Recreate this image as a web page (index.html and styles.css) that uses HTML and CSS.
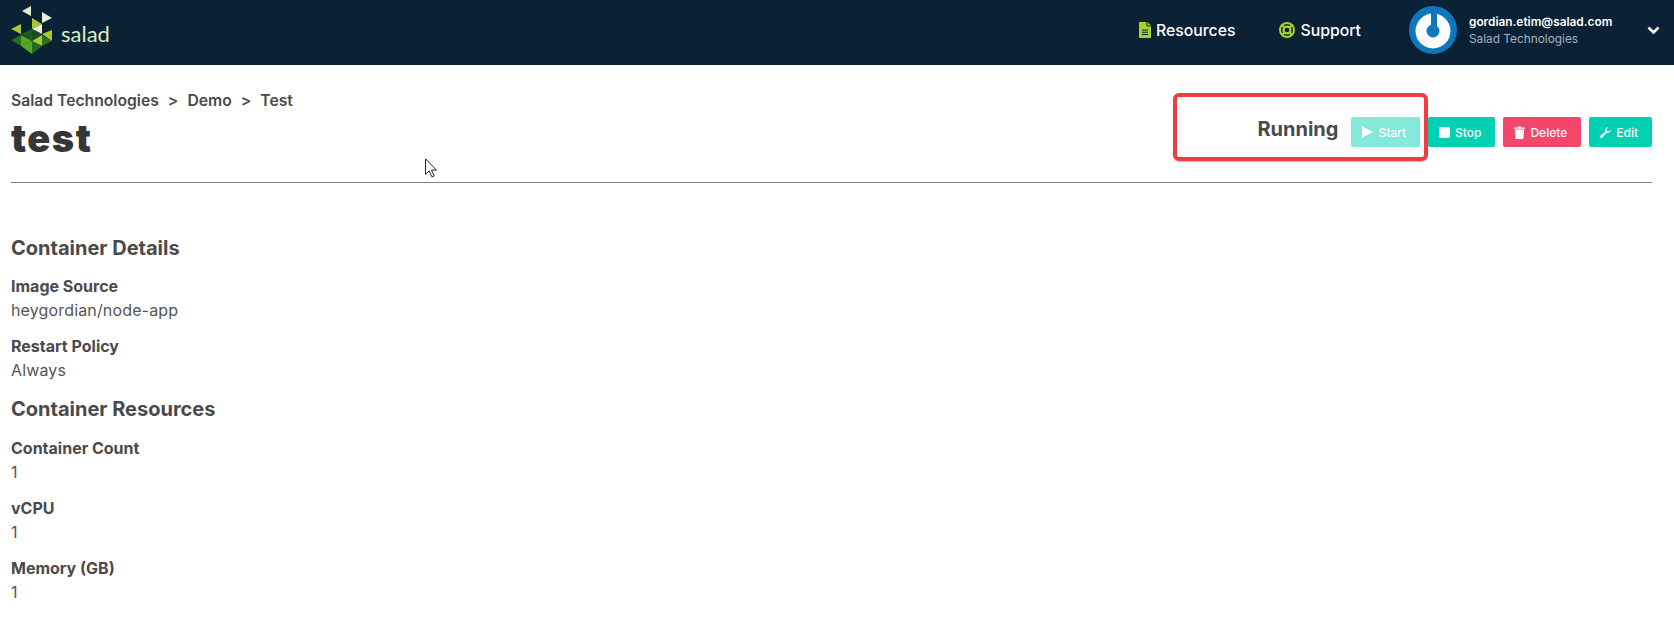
FILE: index.html
```html
<!DOCTYPE html>
<html lang="en">
<head>
<meta charset="utf-8">
<title>test</title>
<link rel="stylesheet" href="styles.css">
</head>
<body>
<header class="topbar">
  <a class="logo">
    <svg class="logo-mark" viewBox="11 5 41 48" width="41" height="48" aria-hidden="true">
      <polygon points="22,10 31,5 31,15" fill="#dcedc8"/>
      <polygon points="42,11 52,17 42,22" fill="#e4f2d2"/>
      <polygon points="32,17 42,23 32,28" fill="#a6c832"/>
      <polygon points="32,28 42,23 42,33" fill="#e4f2d2"/>
      <polygon points="11,28 21,23 21,33" fill="#a6c832"/>
      <polygon points="21,33 32,28 32,40" fill="#1f5a22"/>
      <polygon points="32,28 42,33 32,40" fill="#1c4f20"/>
      <polygon points="42,33 52,29 52,40" fill="#a6c832"/>
      <polygon points="11,39 21,34 21,45" fill="#2c6a22"/>
      <polygon points="21,34 32,40 21,45" fill="#5aa526"/>
      <polygon points="32,40 42,34 42,45" fill="#a6c832"/>
      <polygon points="42,34 52,40 42,45" fill="#2f7023"/>
      <polygon points="21,45 32,40 32,53" fill="#5aa526"/>
      <polygon points="32,40 42,45 32,53" fill="#2c6a22"/>
    </svg>
    <span class="logo-word">salad</span>
  </a>
  <nav class="nav">
    <a class="nav-link">
      <svg class="nav-icon" viewBox="0 0 12 16" width="12" height="16" aria-hidden="true"><path fill="#a6d32b" fill-rule="evenodd" d="M0 1C0 .4.4 0 1 0h6.500v4.500H12V15c0 .6-.4 1-1 1H1c-.6 0-1-.4-1-1zM8.500 0L12 3.500H8.500zM3 7.500v1h6v-1zm0 2.200v1h6v-1zm0 2.200v1h6v-1z"/></svg>
      Resources
    </a>
    <a class="nav-link">
      <svg class="nav-icon" viewBox="0 0 16 16" width="16" height="16" aria-hidden="true"><circle cx="8" cy="8" r="8" fill="#a6d32b"/><circle cx="8" cy="8" r="5.300" fill="none" stroke="#0a2136" stroke-width="1.400"/><path d="M3.500 3.500l9 9M12.500 3.500l-9 9" stroke="#a6d32b" stroke-width="2.200"/><circle cx="8" cy="8" r="2.300" fill="#0a2136"/></svg>
      Support
    </a>
  </nav>
  <div class="account">
    <svg class="avatar" viewBox="0 0 48 48" width="48" height="48" aria-hidden="true">
      <circle cx="24" cy="24" r="24" fill="#0f78bd"/>
      <circle cx="24" cy="25" r="12" fill="none" stroke="#fbfbfb" stroke-width="11"/>
      <path d="M25 7v17" stroke="#0f78bd" stroke-width="6" stroke-linecap="round"/>
    </svg>
    <div class="account-text">
      <div class="account-email">gordian.etim@salad.com</div>
      <div class="account-org">Salad Technologies</div>
    </div>
    <svg class="chevron" viewBox="0 0 13 9" width="13" height="9" aria-hidden="true"><path d="M1.500 1.500l5 5 5-5" fill="none" stroke="#fff" stroke-width="2.600"/></svg>
  </div>
</header>

<main class="page">
  <section class="title-row">
    <div class="title-block">
      <div class="crumbs"><span>Salad Technologies</span><span>&gt;</span><span>Demo</span><span>&gt;</span><span>Test</span></div>
      <h1 class="title">test</h1>
    </div>
    <div class="actions">
      <div class="status-group">
        <span class="status">Running</span>
        <button class="btn btn-disabled"><svg viewBox="0 0 12 12" width="11" height="12" aria-hidden="true"><path d="M0 0l12 6-12 6z" fill="#fff"/></svg>Start</button>
        <span class="highlight"></span>
      </div>
      <button class="btn btn-teal"><svg viewBox="0 0 10 10" width="11" height="11" aria-hidden="true"><rect width="10" height="10" rx="1.500" fill="#fff"/></svg>Stop</button>
      <button class="btn btn-red"><svg viewBox="0 0 11 13" width="11" height="13" aria-hidden="true"><path d="M0 1.500h3.500L4 .5h3l.5 1H11v1.300H0zM1 3.500h9l-.6 8.500c0 .6-.5 1-1 1H2.600c-.5 0-1-.4-1-1z" fill="#fff"/></svg>Delete</button>
      <button class="btn btn-teal"><svg viewBox="0 0 12 12" width="11" height="11" aria-hidden="true"><path d="M11.800 3a3.500 3.500 0 0 1-4.800 3.200L2.800 11.500c-.6.700-1.600.7-2.200.1s-.6-1.600.1-2.200L6 5.200A3.500 3.500 0 0 1 9.200.3L7.200 2.400l.5 2 2 .5 2-2z" fill="#fff"/></svg>Edit</button>
    </div>
  </section>
  <hr class="rule">

  <h2 class="section-title first">Container Details</h2>
  <div class="field"><div class="field-label">Image Source</div><div class="field-value">heygordian/node-app</div></div>
  <div class="field"><div class="field-label">Restart Policy</div><div class="field-value">Always</div></div>

  <h2 class="section-title">Container Resources</h2>
  <div class="field"><div class="field-label">Container Count</div><div class="field-value">1</div></div>
  <div class="field"><div class="field-label">vCPU</div><div class="field-value">1</div></div>
  <div class="field"><div class="field-label">Memory (GB)</div><div class="field-value">1</div></div>
</main>

<svg class="cursor" viewBox="0 0 13 20" width="13" height="20" aria-hidden="true"><path d="M.5.8v15.500l3.700-3.400 2.700 6 2.300-1-2.700-5.800h5z" fill="#fff" stroke="#222" stroke-width="1"/></svg>
</body>
</html>
```
FILE: styles.css
```css
* { box-sizing: border-box; }
html, body { margin: 0; padding: 0; }
body {
  position: relative;
  height: 643px;
  overflow: hidden;
  background: #fff;
  color: #4a4a4a;
  font-family: "Inter", "Open Sans", sans-serif;
}
.topbar {
  display: flex;
  align-items: center;
  height: 65px;
  background: #0a2136;
  color: #fff;
  padding: 0 14px 5px 11px;
}
.logo { display: flex; align-items: center; }
.logo-mark { display: block; }
.logo-word {
  margin-left: 9px;
  margin-top: 6px;
  font-family: "Lato", sans-serif;
  font-size: 22px;
  color: #d8ecc0;
}
.nav { display: flex; align-items: center; gap: 44px; margin-left: auto; }
.nav-link {
  display: flex;
  align-items: center;
  gap: 5px;
  font-size: 15.800px;
  font-weight: 500;
}
.nav-icon { display: block; }
.account { display: flex; align-items: center; margin-left: 48px; }
.avatar { display: block; }
.account-text { margin-left: 12px; width: 178px; margin-top: 1px; }
.account-email { font-size: 11.850px; line-height: 17px; font-weight: 600; }
.account-org { font-size: 11.850px; line-height: 17px; color: #a9b1b8; }
.chevron { display: block; margin-top: 1px; }

.page { padding: 0 22px 0 11px; }
.title-row {
  display: flex;
  justify-content: space-between;
  align-items: flex-start;
  height: 117px;
  padding-top: 28px;
}
.crumbs {
  display: flex;
  gap: 9px;
  font-size: 15.700px;
  line-height: 16px;
  font-weight: 600;
}
.title {
  margin: 7px 0 0;
  font-size: 38px;
  line-height: 44px;
  font-weight: 900;
  letter-spacing: 1.500px;
  color: #363636;
}
.actions { display: flex; align-items: flex-start; gap: 8px; margin-top: 24px; }
.status-group { position: relative; display: flex; align-items: flex-start; gap: 13px; }
.status { font-size: 20px; font-weight: 700; line-height: 24px; }
.btn {
  display: flex;
  align-items: center;
  gap: 5px;
  height: 30px;
  padding: 0 14px 0 11px;
  border: 0;
  border-radius: 2px;
  font: 500 12px "Inter", sans-serif;
  color: #fff;
}
.btn-teal { background: #00d1b2; }
.btn-disabled { background: #84e9d9; }
.btn-red { background: #f4466b; }
.highlight {
  position: absolute;
  left: -84px;
  right: -8px;
  top: -24px;
  bottom: -14px;
  border: 4px solid #ef3e42;
  border-radius: 6px;
  box-shadow: 0 1px 1px rgba(0,0,0,.25);
  pointer-events: none;
}
.rule { margin: 0; border: 0; border-top: 1px solid #808080; }
.section-title {
  margin: 15px 0 0;
  font-size: 20px;
  line-height: 24px;
  font-weight: 700;
}
.section-title.first { margin-top: 53px; }
.field { margin-top: 12px; }
.section-title + .field { margin-top: 15px; }
.section-title.first + .field { margin-top: 14px; }
.field-label { font-size: 16px; line-height: 24px; font-weight: 700; }
.field-value { font-size: 16px; line-height: 24px; font-weight: 400; letter-spacing: .15px; color: #555; }
.cursor { position: absolute; left: 425px; top: 158px; }
```
